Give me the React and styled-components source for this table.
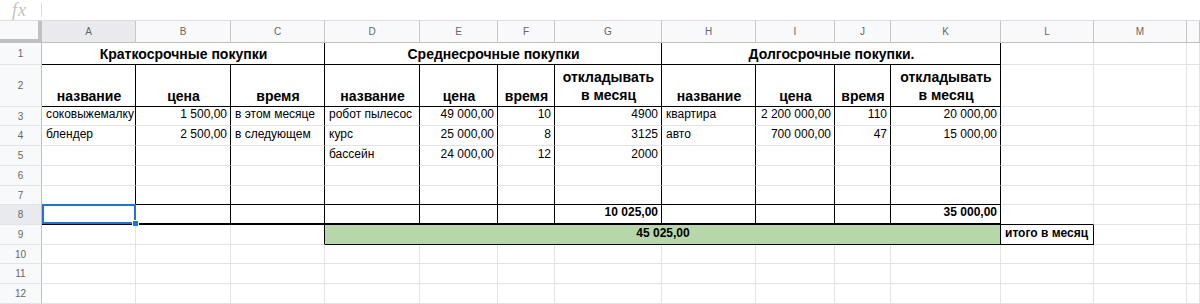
import React from 'react';
import styled, { createGlobalStyle } from 'styled-components';

const GlobalStyle = createGlobalStyle`
  body {
    margin: 0;
    background: #fff;
    font-family: "Liberation Sans", Arial, sans-serif;
    color: #000;
  }
`;

const COLS = [94, 95, 94, 95, 78, 57, 107, 94, 79, 56, 110, 93, 93];
const LETTERS = ['A', 'B', 'C', 'D', 'E', 'F', 'G', 'H', 'I', 'J', 'K', 'L', 'M', ''];
const ROW_HEIGHTS = [22, 42, 19, 20, 20, 20, 19, 20, 20, 19, 20, 20];
const NB = '\u00a0';

const GRID_LINE = '#e2e3e3';
const HEAD_LINE = '#c4c7c5';

// which cell edges carry the black borders of the three tables
const rightBorder = (row, lastCol) => {
  if (row === 1) return [2, 6, 10].includes(lastCol) ? 1 : 0;
  if (row >= 2 && row <= 8) return lastCol <= 10 ? 1 : 0;
  if (row === 9) return [2, 10, 11].includes(lastCol) ? 1 : 0;
  return 0;
};

const bottomBorder = (row, col) => {
  if ([1, 2, 7].includes(row)) return col <= 10 ? 1 : 0;
  if (row === 8) return col <= 10 ? 2 : col === 11 ? 1 : 0;
  if (row === 9) return col >= 3 && col <= 11 ? 1 : 0;
  return 0;
};

const head = (t, span = 1) => ({ t, span, bold: true, align: 'center', size: 14 });
const num = (t, bold) => ({ t, align: 'right', bold });
const txt = (t) => ({ t });

const DATA = {
  1: [head('Краткосрочные покупки', 3), head('Среднесрочные покупки', 4), head('Долгосрочные покупки.', 4)],
  2: [
    head('название'), head('цена'), head('время'),
    head('название'), head('цена'), head('время'), { ...head('откладывать в месяц'), wrap: true },
    head('название'), head('цена'), head('время'), { ...head('откладывать в месяц'), wrap: true },
  ],
  3: [
    txt('соковыжемалку'), num(`1${NB}500,00`), txt('в этом месяце'),
    txt('робот пылесос'), num(`49${NB}000,00`), num('10'), num('4900'),
    txt('квартира'), num(`2${NB}200${NB}000,00`), num('110'), num(`20${NB}000,00`),
  ],
  4: [
    txt('блендер'), num(`2${NB}500,00`), txt('в следующем'),
    txt('курс'), num(`25${NB}000,00`), num('8'), num('3125'),
    txt('авто'), num(`700${NB}000,00`), num('47'), num(`15${NB}000,00`),
  ],
  5: [
    txt(''), txt(''), txt(''),
    txt('бассейн'), num(`24${NB}000,00`), num('12'), num('2000'),
  ],
  8: [
    { t: '', selected: true }, txt(''), txt(''),
    txt(''), txt(''), txt(''), num(`10${NB}025,00`, true),
    txt(''), txt(''), txt(''), num(`35${NB}000,00`, true),
  ],
  9: [
    txt(''), txt(''), txt(''),
    { t: `45${NB}025,00`, span: 8, bold: true, align: 'center', bg: '#b6d7a8' },
    { t: 'итого в месяц', bold: true },
  ],
};

const buildRow = (row) => {
  const given = DATA[row] || [];
  const cells = [];
  let col = 0;
  given.forEach((c) => {
    const span = c.span || 1;
    cells.push({ ...c, col, span });
    col += span;
  });
  while (col < 14) {
    cells.push({ t: '', col, span: 1 });
    col += 1;
  }
  return cells.map((c) => ({
    ...c,
    br: rightBorder(row, c.col + c.span - 1),
    bb: bottomBorder(row, c.col),
  }));
};

const App = () => (
  <>
    <GlobalStyle />
    <FormulaBar>
      <FxBox>
        <Fx>fx</Fx>
      </FxBox>
    </FormulaBar>
    <Sheet>
      <Corner />
      {LETTERS.map((l, i) => (
        <ColHeader key={l || 'n'} $active={i === 0}>
          {l}
        </ColHeader>
      ))}
      {ROW_HEIGHTS.map((h, r) => {
        const row = r + 1;
        return (
          <React.Fragment key={row}>
            <RowHeader $active={row === 8}>{row}</RowHeader>
            {buildRow(row).map((c) => (
              <Cell
                key={c.col}
                $span={c.span}
                $align={c.align}
                $bold={c.bold}
                $size={c.size}
                $bg={c.bg}
                $br={c.br}
                $bb={c.bb}
                $wrap={c.wrap}
                $selected={c.selected}
              >
                {c.t}
              </Cell>
            ))}
          </React.Fragment>
        );
      })}
    </Sheet>
  </>
);

const FormulaBar = styled.div`
  display: flex;
  align-items: center;
  height: 21px;
  box-sizing: border-box;
  border-bottom: 1px solid #dadce0;
`;

const FxBox = styled.div`
  width: 42px;
  height: 14px;
  display: flex;
  align-items: center;
  padding-left: 12px;
  box-sizing: border-box;
  border-right: 1px solid #dadce0;
`;

const Fx = styled.span`
  font-family: "Liberation Serif", "DejaVu Serif", serif;
  font-style: italic;
  font-size: 18px;
  line-height: 14px;
  color: #c2c2c2;
  letter-spacing: 1px;
`;

const Sheet = styled.div`
  display: grid;
  grid-template-columns: 42px ${COLS.map((w) => `${w}px`).join(' ')} 1fr;
  grid-template-rows: 22px ${ROW_HEIGHTS.map((h) => `${h}px`).join(' ')};
  overflow: hidden;
`;

const Corner = styled.div`
  background: #f8f9fa;
  box-sizing: border-box;
  border-right: 4px solid #c0c0c0;
  border-bottom: 4px solid #c0c0c0;
`;

const ColHeader = styled.div`
  display: flex;
  align-items: center;
  justify-content: center;
  box-sizing: border-box;
  background: ${(p) => (p.$active ? '#e8eaed' : '#f8f9fa')};
  border-right: 1px solid ${HEAD_LINE};
  border-bottom: 1px solid #c0c0c0;
  font-size: 10px;
  color: #666;
`;

const RowHeader = styled.div`
  display: flex;
  align-items: center;
  justify-content: center;
  box-sizing: border-box;
  background: ${(p) => (p.$active ? '#e8eaed' : '#f8f9fa')};
  border-right: 1px solid #c0c0c0;
  border-bottom: 1px solid ${GRID_LINE};
  font-size: 10px;
  color: #666;
`;

const JUSTIFY = { left: 'flex-start', right: 'flex-end', center: 'center' };

const Cell = styled.div`
  position: relative;
  grid-column: span ${(p) => p.$span};
  display: flex;
  align-items: flex-end;
  justify-content: ${(p) => JUSTIFY[p.$align || 'left']};
  box-sizing: border-box;
  min-width: 0;
  padding: 0 3px ${(p) => (p.$size ? 2 : 3)}px 4px;
  background: ${(p) => p.$bg || '#fff'};
  border-right: ${(p) => (p.$br ? `${p.$br}px solid #000` : `1px solid ${GRID_LINE}`)};
  border-bottom: ${(p) => (p.$bb ? `${p.$bb}px solid #000` : `1px solid ${GRID_LINE}`)};
  font-size: ${(p) => p.$size || 12}px;
  font-weight: ${(p) => (p.$bold ? 700 : 400)};
  line-height: ${(p) => (p.$wrap ? 18 : 15)}px;
  text-align: center;
  white-space: ${(p) => (p.$wrap ? 'normal' : 'nowrap')};
  overflow: ${(p) => (p.$selected ? 'visible' : 'hidden')};
  z-index: ${(p) => (p.$selected ? 2 : 'auto')};

  ${(p) =>
    p.$selected &&
    `
    &::before {
      content: '';
      position: absolute;
      inset: -1px -1px -1px 0;
      border: 2px solid #1a73e8;
    }
    &::after {
      content: '';
      position: absolute;
      right: -4px;
      bottom: -4px;
      width: 5px;
      height: 5px;
      background: #1a73e8;
      border: 1px solid #fff;
    }
  `}
`;

export default App;
